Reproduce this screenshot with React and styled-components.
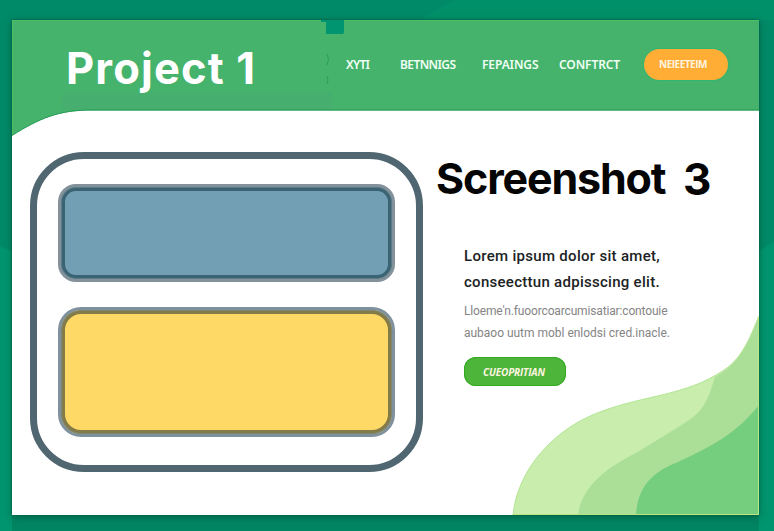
import React from "react";
import styled, { createGlobalStyle } from "styled-components";

const GlobalStyle = createGlobalStyle`
  *, *::before, *::after { box-sizing: border-box; }
  html, body, #root { height: 100%; }
  body { margin: 0; background: #008a68; font-family: Inter, "Liberation Sans", sans-serif; }
`;

const Page = styled.div`
  position: relative;
  width: 774px;
  height: 531px;
  padding: 20px 15px 16px 12px;
  overflow: hidden;
  background: #008a68;
`;

const Backdrop = styled.svg`
  position: absolute;
  inset: 0;
`;

const Card = styled.main`
  position: relative;
  display: flex;
  flex-direction: column;
  height: 495px;
  background: #fff;
  box-shadow: 0 0 2px #00563d, 0 2px 8px rgba(0, 72, 48, 0.5);
`;

const CardArt = styled.svg`
  position: absolute;
  inset: 0;
`;

const Header = styled.header`
  position: relative;
  display: flex;
  height: 91px;
  flex: none;
  border-top: 1px solid transparent;
`;

const Brand = styled.h1`
  width: 334px;
  margin: 0;
  padding: 22px 0 0 54px;
  font-size: 43.5px;
  line-height: 50px;
  font-weight: 700;
  letter-spacing: ${(p) => p.$track}px;
  color: #fff;
  white-space: nowrap;
`;

const Nav = styled.nav`
  display: flex;
  height: 31px;
  margin-top: 28px;
  align-items: center;
`;

const NavLink = styled.a`
  width: ${(p) => p.$width}px;
  font: 600 12px/29px "Noto Sans", sans-serif;
  letter-spacing: ${(p) => p.$track}px;
  color: #f0fff4;
  white-space: nowrap;
`;

const Pill = styled.button`
  display: flex;
  align-items: center;
  width: ${(p) => p.$width}px;
  height: ${(p) => p.$height}px;
  padding: 0 0 ${(p) => p.$lift}px ${(p) => p.$inset}px;
  border: 0;
  border-radius: ${(p) => p.$radius}px;
  background: ${(p) => p.$fill};
  box-shadow: ${(p) => p.$edge};
  color: #fff4e0;
  font: ${(p) => p.$slant} 700 10px/1 "Open Sans", sans-serif;
  letter-spacing: ${(p) => p.$track}px;
  white-space: nowrap;
`;

const Body = styled.div`
  position: relative;
  display: flex;
  flex: 1;
`;

const Frame = styled.section`
  display: flex;
  flex-direction: column;
  gap: 25px;
  flex: none;
  width: 393px;
  height: 320px;
  margin: 41px 0 0 18px;
  padding: 25px 21px;
  border: 7px solid #506671;
  border-radius: 54px;
`;

const Panel = styled.div`
  height: ${(p) => p.$height}px;
  border: 3px solid ${(p) => p.$outer};
  border-radius: ${(p) => p.$radius}px;
  background: ${(p) => p.$fill};
  box-shadow: inset 0 0 0 1px ${(p) => p.$mid}, inset 0 0 0 4px ${(p) => p.$inner};
`;

const Copy = styled.section`
  padding: 40px 0 0 13px;
`;

const Heading = styled.h2`
  display: flex;
  margin: 0;
  height: 54px;
  font-size: 43px;
  line-height: 54px;
  color: #050505;
  white-space: nowrap;
`;

const HeadingWord = styled.span`
  width: 247px;
  font-weight: 650;
  letter-spacing: ${(p) => p.$track}px;
`;

const HeadingNumber = styled.span`
  font-size: 44px;
  line-height: 56px;
  font-weight: 650;
`;

const Details = styled.div`
  padding: 38px 0 0 28px;
`;

const Lead = styled.p`
  margin: 0;
  font: 500 15px/26px Roboto, sans-serif;
  color: #202223;
`;

const Line = styled.span`
  display: block;
  white-space: nowrap;
  letter-spacing: ${(p) => p.$track}px;
`;

const Note = styled.p`
  margin: 5px 0 13px;
  font: 400 12px/22px Roboto, sans-serif;
  color: #858585;
`;

const links = [
  { label: "XYTI", width: 54, track: -0.7 },
  { label: "BETNNIGS", width: 82, track: -0.6 },
  { label: "FEPAINGS", width: 77, track: -0.1 },
  { label: "CONFTRCT", width: 85, track: -0.1 },
];

export default function App() {
  return (
    <Page>
      <GlobalStyle />
      <Backdrop width="774" height="531" viewBox="0 0 774 531" aria-hidden="true">
        <path d="M0 246Q8 251 20 252V531H0ZM774 242Q763 247 755 256V531H774Z" fill="#00956f" />
        <path d="M12 505H759V531H12Z" fill="#008562" />
        <path d="M420 20Q438 8 455 0H774V20Z" fill="#009069" />
      </Backdrop>
      <Card>
        <CardArt width="747" height="495" viewBox="0 0 747 495" aria-hidden="true">
          <path d="M0 0H747V90.5H80C47 90 28 98 0 115.5Z" fill="#46b36c" />
          <path d="M50 73H320V90H50Z" fill="#46af6f" />
          <path d="M0.5 115V0.5H747" fill="none" stroke="#4fbd61" />
          <path d="M747 90H80C47 90 28 98 0 115.5" fill="none" stroke="#229a55" />
          <path d="M309 0H332V12Q332 14 329 14H314V2H309Z" fill="#009571" />
          <path d="M315 34Q318 39 315 45M315 56Q317 60 315 64" fill="none" stroke="#249f5b" />
          <path d="M501 495C506 446 546 407 588 392C632 375 674 376 712 350C732 337 740 312 747 296V495Z" fill="#c8edac" />
          <path d="M566 495C570 462 604 443 624 433L668 406C690 393 695 384 703 357C732 342 740 312 747 296V495Z" fill="#abdf98" />
          <path d="M624 495C626 462 646 450 666 442C700 426 724 414 747 385V495Z" fill="#75cd7e" />
          <path d="M501 495C506 446 546 407 588 392C632 375 674 376 712 350C732 337 740 312 747 296" fill="none" stroke="#b2e693" />
          <path d="M501 494.5H746.5V297" fill="none" stroke="#b6e783" />
        </CardArt>
        <Header>
          <Brand $track={1.15}>Project 1</Brand>
          <Nav>
            {links.map((l) => (
              <NavLink key={l.label} $width={l.width} $track={l.track}>{l.label}</NavLink>
            ))}
            <Pill $width={84} $height={31} $inset={15} $lift={2} $radius={16} $fill="#ffad35" $edge="0 0 0 1px #31b573" $slant="normal" $track={-0.5}>
              NEIEETEIM
            </Pill>
          </Nav>
        </Header>
        <Body>
          <Frame>
            <Panel $height={98} $radius={18} $outer="#82919a" $mid="#5e7b87" $inner="#3a6474" $fill="#739fb5" />
            <Panel $height={130} $radius={23} $outer="#7f919d" $mid="#7f8775" $inner="#837b48" $fill="#ffd966" />
          </Frame>
          <Copy>
            <Heading>
              <HeadingWord $track={-1.15}>Screenshot</HeadingWord>
              <HeadingNumber>3</HeadingNumber>
            </Heading>
            <Details>
              <Lead>
                <Line $track={0.3}>Lorem ipsum dolor sit amet,</Line>
                <Line $track={0.28}>conseecttun adpisscing elit.</Line>
              </Lead>
              <Note>
                <Line $track={-0.15}>Lloeme'n.fuoorcoarcumisatiar:contouie</Line>
                <Line $track={-0.02}>aubaoo uutm mobl enlodsi cred.inacle.</Line>
              </Note>
              <Pill $width={102} $height={29} $inset={19} $lift={0} $radius={12} $fill="#4eb53b" $edge="inset 0 0 0 1px #35a822" $slant="italic" $track={-0.15}>
                CUEOPRITIAN
              </Pill>
            </Details>
          </Copy>
        </Body>
      </Card>
    </Page>
  );
}
